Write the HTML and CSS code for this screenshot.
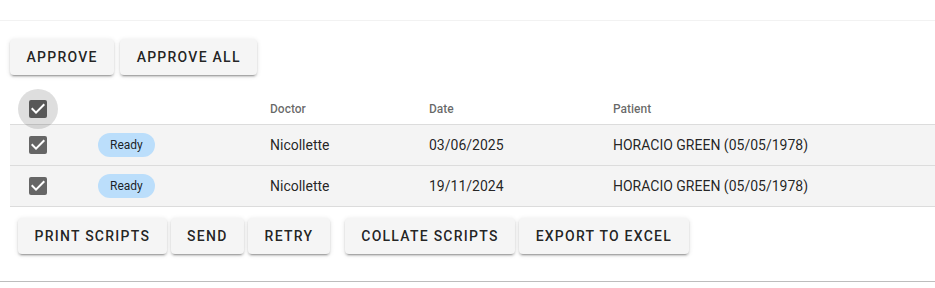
FILE: index.html
```html
<!DOCTYPE html>
<html lang="en">
<head>
    <meta charset="UTF-8">
    <meta name="viewport" content="width=device-width, initial-scale=1.0">
    <title>Scripts</title>
    <link rel="stylesheet" href="styles.css">
</head>
<body>

    <div class="card">
        <div class="actions top-actions">
            <button class="btn">Approve</button>
            <button class="btn">Approve all</button>
        </div>

        <div class="table">
            <div class="row head">
                <div class="cell check-cell">
                    <span class="box ripple"><svg viewBox="3 3 18 18"><path d="M10 17l-5-5 1.41-1.41L10 14.17l7.59-7.59L19 8l-9 9z"/></svg></span>
                </div>
                <div class="cell"></div>
                <div class="cell">Doctor</div>
                <div class="cell">Date</div>
                <div class="cell">Patient</div>
            </div>
            <div class="row">
                <div class="cell check-cell">
                    <span class="box"><svg viewBox="3 3 18 18"><path d="M10 17l-5-5 1.41-1.41L10 14.17l7.59-7.59L19 8l-9 9z"/></svg></span>
                </div>
                <div class="cell"><span class="chip">Ready</span></div>
                <div class="cell">Nicollette</div>
                <div class="cell">03/06/2025</div>
                <div class="cell">HORACIO GREEN (05/05/1978)</div>
            </div>
            <div class="row">
                <div class="cell check-cell">
                    <span class="box"><svg viewBox="3 3 18 18"><path d="M10 17l-5-5 1.41-1.41L10 14.17l7.59-7.59L19 8l-9 9z"/></svg></span>
                </div>
                <div class="cell"><span class="chip">Ready</span></div>
                <div class="cell">Nicollette</div>
                <div class="cell">19/11/2024</div>
                <div class="cell">HORACIO GREEN (05/05/1978)</div>
            </div>
        </div>

        <div class="actions bottom-actions">
            <button class="btn">Print scripts</button>
            <button class="btn">Send</button>
            <button class="btn">Retry</button>
            <button class="btn spaced">Collate scripts</button>
            <button class="btn">Export to excel</button>
        </div>
    </div>

</body>
</html>
```

FILE: styles.css
```css
body {
    margin: 0;
    font-family: Roboto, "Liberation Sans", sans-serif;
    background-color: #fff;
    color: rgba(0, 0, 0, 0.87);
}
.card {
    margin-top: 20px;
    border-top: 1px solid #f2f2f2;
    border-bottom: 1px solid #bdbdbd;
    padding: 18px 0 27px 10px;
    box-shadow: 0 1px 1px rgba(0,0,0,0.08);
}
.actions {
    display: flex;
    align-items: center;
}
.top-actions {
    gap: 6px;
}
.bottom-actions {
    gap: 4px;
    padding-left: 8px;
    margin-top: 11px;
}
.btn {
    height: 36px;
    padding: 0 16.5px;
    border: none;
    border-radius: 4px;
    background-color: #f5f5f5;
    font-family: inherit;
    font-size: 14px;
    font-weight: 500;
    letter-spacing: 1.25px;
    text-transform: uppercase;
    color: rgba(0, 0, 0, 0.87);
    box-shadow: 0 3px 1px -2px rgba(0,0,0,0.2), 0 2px 2px 0 rgba(0,0,0,0.14), 0 1px 5px 0 rgba(0,0,0,0.12);
    cursor: pointer;
}
.btn.spaced {
    margin-left: 11px;
}
.table {
    margin-top: 15px;
}
.row {
    display: grid;
    grid-template-columns: 88px 172px 159px 184px 1fr;
    align-items: center;
    height: 40px;
    background-color: #f4f4f4;
    border-bottom: 1px solid #dcdcdc;
    font-size: 14px;
}
.row.head {
    box-sizing: border-box;
    height: 35px;
    padding-top: 3px;
    background-color: #fff;
    font-size: 12px;
    font-weight: 500;
    color: rgba(0, 0, 0, 0.6);
}
.check-cell {
    padding-left: 19px;
    display: flex;
}
.box {
    position: relative;
    width: 18px;
    height: 18px;
    border-radius: 2px;
    background-color: #666;
    display: inline-flex;
}
.box svg {
    position: relative;
    width: 18px;
    height: 18px;
    fill: #fff;
    z-index: 1;
}
.ripple::before {
    content: "";
    position: absolute;
    left: -11px;
    top: -11px;
    width: 40px;
    height: 40px;
    border-radius: 50%;
    background-color: rgba(0, 0, 0, 0.13);
}
.chip {
    display: inline-flex;
    align-items: center;
    height: 24px;
    padding: 0 12px;
    border-radius: 12px;
    background-color: #bbdefb;
    font-size: 12px;
    color: rgba(0, 0, 0, 0.87);
}
```
